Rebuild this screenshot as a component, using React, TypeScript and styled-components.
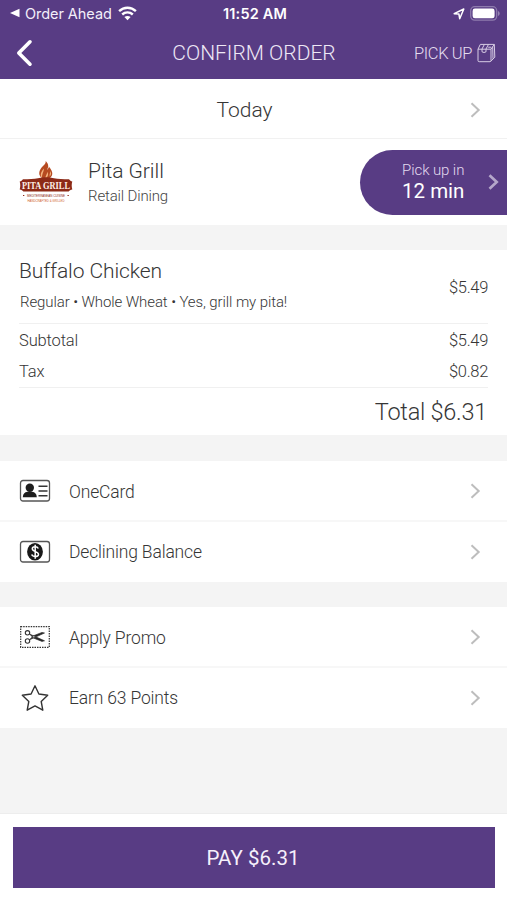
import React from 'react';
import styled, { createGlobalStyle } from 'styled-components';

const Global = createGlobalStyle`
  *, *::before, *::after { box-sizing: border-box; }
  html, body { margin: 0; padding: 0; }
  body { background: #f4f4f4; font-family: Roboto, "Liberation Sans", sans-serif; }
  button { font: inherit; }
`;

const PURPLE = '#583c84';

const Screen = styled.div`
  width: 507px;
  height: 900px;
  display: flex;
  flex-direction: column;
  background: #f4f4f4;
  overflow: hidden;
`;

const Header = styled.header`
  height: 79px;
  background: ${PURPLE};
  color: #fff;
`;

const StatusBar = styled.div`
  height: 27px;
  padding: 0 7px 0 10px;
  display: grid;
  grid-template-columns: 1fr auto 1fr;
  align-items: center;
  font-family: Inter, "Liberation Sans", sans-serif;
`;

const StatusGroup = styled.div<{ $end?: boolean }>`
  display: flex;
  align-items: center;
  justify-content: ${(p) => (p.$end ? 'flex-end' : 'flex-start')};
  gap: 5px;
`;

const NavBar = styled.div`
  height: 52px;
  padding: 0 11px 0 16px;
  display: grid;
  grid-template-columns: 1fr auto 1fr;
  align-items: center;
`;

const NavTitle = styled.div`
  padding: 2px 4px 0 0;
  display: flex;
`;

const BackButton = styled.button`
  display: flex;
  width: 18px;
  padding: 0;
  border: 0;
  background: none;
  color: #fff;
`;

const PickUpMode = styled.div`
  display: flex;
  justify-content: flex-end;
  align-items: center;
  gap: 5px;

  span { padding-top: 1px; }
`;

const Text = styled.span<{ $size: number; $weight?: number; $color?: string; $spacing?: number }>`
  font-size: ${(p) => p.$size}px;
  font-weight: ${(p) => p.$weight ?? 300};
  color: ${(p) => p.$color ?? '#363636'};
  letter-spacing: ${(p) => p.$spacing ?? 0}px;
  line-height: 1.2;
  white-space: nowrap;
`;

const Card = styled.section<{ $gap?: number }>`
  background: #fff;
  margin-bottom: ${(p) => p.$gap ?? 0}px;
`;

const DayRow = styled.div`
  height: 60px;
  padding: 2px 26px 0 25px;
  display: grid;
  grid-template-columns: 1fr auto 1fr;
  align-items: center;
  border-bottom: 1px solid #f1f1f1;

  svg { grid-column: 3; justify-self: end; }
  span { grid-column: 2; margin-right: 17px; padding-top: 3px; }
`;

const VendorRow = styled.div`
  height: 86px;
  padding-left: 19px;
  display: flex;
  align-items: center;
`;

const VendorNames = styled.div`
  flex: 1;
  padding: 0 0 0 15px;
  display: flex;
  flex-direction: column;
  gap: 2px;
`;

const PickupTime = styled.button`
  width: 147px;
  height: 65px;
  padding: 0 8px 0 42px;
  border: 0;
  border-radius: 33px 0 0 33px;
  display: flex;
  align-items: center;
  justify-content: space-between;
  background: ${PURPLE};
`;

const PickupLabel = styled.span`
  display: flex;
  flex-direction: column;
  align-items: center;
`;

const OrderCard = styled(Card)`
  height: 185px;
  padding: 0 19px;
`;

const OrderItem = styled.div`
  height: 74px;
  display: flex;
  align-items: center;
  justify-content: space-between;
  border-bottom: 1px solid #f0f0f0;
`;

const ItemText = styled.div`
  display: flex;
  flex-direction: column;
  gap: 8px;
  padding-bottom: 3px;

  span + span { padding-left: 1px; }
`;

const ItemPrice = styled.div`
  padding-top: 2px;
`;

const Charges = styled.div`
  height: 64px;
  padding-top: 1px;
  border-bottom: 1px solid #f0f0f0;
`;

const Charge = styled.div`
  height: 31.5px;
  display: flex;
  align-items: center;
  justify-content: space-between;
`;

const TotalRow = styled.div`
  height: 47px;
  padding: 2px 1px 0 0;
  display: flex;
  align-items: center;
  justify-content: flex-end;
`;

const OptionRow = styled.button<{ $height: number; $line?: boolean }>`
  width: 100%;
  height: ${(p) => p.$height}px;
  padding: 0 26px 0 19px;
  border: 0;
  border-bottom: ${(p) => (p.$line ? '2px solid #f7f7f7' : '0')};
  display: grid;
  grid-template-columns: 50px 1fr auto;
  align-items: center;
  text-align: left;
  background: #fff;

  span { padding-top: ${(p) => (p.$line ? 3 : 1)}px; }
`;

const Footer = styled.footer`
  height: 87px;
  margin-top: auto;
  padding: 13px 12px 0 13px;
  background: #fff;
  border-top: 1px solid #ededed;
`;

const PayButton = styled.button`
  width: 100%;
  height: 61px;
  padding: 2px 2px 0 0;
  border: 0;
  display: flex;
  align-items: center;
  justify-content: center;
  background: ${PURPLE};
`;

const Chevron = ({ color = '#bdbdbd', width = 2 }: { color?: string; width?: number }) => (
  <svg width="12" height="18" viewBox="0 0 12 18" fill="none" stroke={color} strokeWidth={width}>
    <path d="M2.500 2.200 9.700 9l-7.200 6.800" />
  </svg>
);

const BackIcon = () => (
  <svg width="18" height="28" viewBox="0 0 18 28" fill="none" stroke="#fff" strokeWidth="3.600" strokeLinecap="round" strokeLinejoin="round">
    <path d="M14 2.800 2.800 14 14 25.200" />
  </svg>
);

const BackTriangle = () => (
  <svg width="10" height="10" viewBox="0 0 10 10" fill="#fff">
    <path d="M0 5 9.500.7v8.600z" />
  </svg>
);

const Wifi = () => (
  <svg width="20" height="15" viewBox="-1 0 20 15" fill="none" stroke="#fff" strokeWidth="2.400">
    <path d="M1.100 5.200c4.800-4.600 12-4.600 16.800 0" />
    <path d="M4.200 8.500c3-2.800 7.600-2.800 10.600 0" />
    <path d="M9.500 14.200 6.400 11.100c1.700-1.600 4.500-1.600 6.200 0z" fill="#fff" stroke="none" />
  </svg>
);

const LocationArrow = () => (
  <svg width="12" height="12" viewBox="0 0 12 12" fill="none" stroke="#fff" strokeWidth="1.500" strokeLinejoin="round">
    <path d="M1.200 5.700 10.800 1 6.700 10.700 5.900 6z" />
  </svg>
);

const Battery = () => (
  <svg width="30" height="15" viewBox="0 0 30 15">
    <rect x=".7" y=".7" width="26" height="13.400" rx="4" fill="none" stroke="#8e7bad" strokeWidth="1.300" />
    <rect x="2.600" y="2.600" width="22" height="9.600" rx="2.300" fill="#fff" />
    <path d="M28.200 5v5c1.800-.8 1.800-4.200 0-5z" fill="#a394bd" />
  </svg>
);

const Bag = () => (
  <svg width="19" height="20" viewBox="0 0 19 20" fill="none" stroke="#d8cde5" strokeWidth="1" strokeLinejoin="round">
    <path d="M1 6.200 3.300 1.400h14L14 6.200zM1 6.200v11.300q0 1.200 1.200 1.200H13q1 0 1-1.200V6.200" />
    <path d="m17.300 1.400.5 12.800-3.900 4M15.700 3.700l.3 12" />
    <path d="m5 6 2.300-4.400M9 6l2.400-4.400M5 6v2.800q2 1.400 4 0V6M11.200 4.200h3" />
  </svg>
);

const LogoSvg = styled.svg`
  flex: none;
  overflow: visible;
`;

const PitaGrillLogo = () => (
  <LogoSvg width="54" height="43" viewBox="0 0 54 43">
    <path d="M25.500 18.500c-8-3.500-5.500-9.500-1.500-13.500 2-2 3-3 2.700-5 4 4 2.300 7 1.300 9 1-1 2-2 1.800-3.400 4.700 5.400 5.200 10-1.500 12.900z" fill="#b64a20" />
    <path d="M23.300 17.500c-3.500-4 0-8 1.600-10-.1 4-2.600 6-1.600 10zM26.500 17.800c-.5-3 2-4.500 1.600-7 2 3 .5 5-1.600 7zM30.800 15.500c1.700-2 1.500-3.500.6-5.500-.1 2.500-1.300 3-.6 5.500z" fill="#f2b27e" />
    <path d="M4 18.300c6-.1 11 0 15-1 5-1.300 11-1.300 16 0 4 1 9 .9 15 1 1 1.300 1.800 1.900 3.300 2.300-.8 2.600-.8 5.200 0 7.800-1.800.2-2.800.9-3.600 2.200H4.300C3.500 29.300 2.500 28.600.7 28.400c.8-2.600.8-5.200 0-7.800 1.500-.4 2.300-1 3.300-2.300z" fill="#8c2a17" />
    <text x="27" y="28" textAnchor="middle" textLength="48" lengthAdjust="spacingAndGlyphs" fontFamily="Liberation Serif, serif" fontWeight="700" fontSize="10" fill="#fff0e8">PITA GRILL</text>
    <text x="27" y="35.600" textAnchor="middle" textLength="38" lengthAdjust="spacingAndGlyphs" fontFamily="Liberation Sans, sans-serif" fontSize="3.600" fill="#8c2a17">MEDITERRANEAN CUISINE</text>
    <text x="27" y="41" textAnchor="middle" textLength="37" lengthAdjust="spacingAndGlyphs" fontFamily="Liberation Sans, sans-serif" fontSize="3.200" fill="#cf5a2c">HANDCRAFTED &amp; GRILLED</text>
    <path d="M4 34h1.300v1H4zM48.500 34h1.300v1h-1.300z" fill="#8c2a17" />
  </LogoSvg>
);

const CardIcon = () => (
  <svg width="32" height="24" viewBox="0 0 32 24">
    <rect x="1.500" y="1.500" width="29" height="20.500" rx="2.500" fill="#fff" stroke="#555" strokeWidth="1.300" />
    <circle cx="10.800" cy="8.700" r="4.200" fill="#1d1d1d" />
    <path d="M3.800 18.200q.2-4.700 4.700-5.400h4.600q4.500.7 4.700 5.400z" fill="#1d1d1d" />
    <path d="M19.500 7.200h9M19.500 12h9M19.500 16.700h9" stroke="#333" strokeWidth="1.400" />
  </svg>
);

const CashIcon = () => (
  <svg width="32" height="24" viewBox="0 0 32 24">
    <rect x="1.500" y="1.500" width="29" height="20.500" rx="2.500" fill="#fff" stroke="#555" strokeWidth="1.300" />
    <ellipse cx="16" cy="11.800" rx="7.900" ry="8.800" fill="#191919" />
    <path d="M19.300 8.500c-1-2.300-6-2.400-6 .3 0 3.400 6.200 2.200 6.200 5.600 0 2.900-5.800 2.700-6.800.1M16.200 4.800v14" fill="none" stroke="#fff" strokeWidth="1.500" />
  </svg>
);

const PromoIcon = () => (
  <svg width="32" height="24" viewBox="0 0 32 24" fill="none" stroke="#333">
    <rect x="1.700" y="1.700" width="28.600" height="20.600" strokeWidth="1.200" strokeDasharray="1.500 1" />
    <g strokeWidth="1.100">
      <circle cx="8.500" cy="7.800" r="2.200" />
      <circle cx="8.500" cy="16" r="2.200" />
    </g>
    <path d="M10.500 9 25.500 15.800l-2.500.6L14.400 13zM10.500 14.800 25.500 8l-2.500-.6-8.600 3.400z" fill="#222" strokeWidth=".7" />
  </svg>
);

const StarIcon = () => (
  <svg width="32" height="30" viewBox="0 0 32 30" fill="none" stroke="#333" strokeWidth="1.400" strokeLinejoin="round">
    <path d="m16 2.800 3.900 8.200 8.800 1.200-6.500 6.300 1.600 8.700-7.800-4.300-7.800 4.300 1.600-8.700-6.500-6.300 8.800-1.200z" />
  </svg>
);

const options = [
  [
    { label: 'OneCard', icon: <CardIcon />, height: 61 },
    { label: 'Declining Balance', icon: <CashIcon />, height: 60 },
  ],
  [
    { label: 'Apply Promo', icon: <PromoIcon />, height: 61 },
    { label: 'Earn 63 Points', icon: <StarIcon />, height: 60 },
  ],
];

const charges = [
  { label: 'Subtotal', amount: '$5.49' },
  { label: 'Tax', amount: '$0.82' },
];

export default function App() {
  return (
    <>
      <Global />
      <Screen>
        <Header>
          <StatusBar>
            <StatusGroup>
              <BackTriangle />
              <Text $size={14.5} $weight={400} $color="#f3effa" $spacing={-0.05}>Order Ahead</Text>
              <Wifi />
            </StatusGroup>
            <Text $size={14.5} $weight={600} $color="#fff" $spacing={0.2}>11:52 AM</Text>
            <StatusGroup $end>
              <LocationArrow />
              <Battery />
            </StatusGroup>
          </StatusBar>
          <NavBar>
            <BackButton aria-label="Back"><BackIcon /></BackButton>
            <NavTitle>
              <Text $size={21} $color="#eee8f6">CONFIRM ORDER</Text>
            </NavTitle>
            <PickUpMode>
              <Text $size={16.5} $color="#e6def0" $spacing={-0.4}>PICK UP</Text>
              <Bag />
            </PickUpMode>
          </NavBar>
        </Header>

        <Card $gap={25}>
          <DayRow>
            <Text $size={21}>Today</Text>
            <Chevron />
          </DayRow>
          <VendorRow>
            <PitaGrillLogo />
            <VendorNames>
              <Text $size={21} $spacing={-0.05}>Pita Grill</Text>
              <Text $size={15} $spacing={-0.15} $color="#444">Retail Dining</Text>
            </VendorNames>
            <PickupTime>
              <PickupLabel>
                <Text $size={15} $spacing={-0.1} $color="#e3daef">Pick up in</Text>
                <Text $size={20.5} $weight={400} $color="#fff">12 min</Text>
              </PickupLabel>
              <Chevron color="#b5a7ca" width={2.7} />
            </PickupTime>
          </VendorRow>
        </Card>

        <OrderCard $gap={26}>
          <OrderItem>
            <ItemText>
              <Text $size={21} $spacing={-0.1}>Buffalo Chicken</Text>
              <Text $size={15} $spacing={-0.1}>Regular • Whole Wheat • Yes, grill my pita!</Text>
            </ItemText>
            <ItemPrice>
              <Text $size={16.5} $spacing={-0.3}>$5.49</Text>
            </ItemPrice>
          </OrderItem>
          <Charges>
            {charges.map((c) => (
              <Charge key={c.label}>
                <Text $size={16.5} $spacing={-0.15}>{c.label}</Text>
                <Text $size={16.5} $spacing={-0.3}>{c.amount}</Text>
              </Charge>
            ))}
          </Charges>
          <TotalRow>
            <Text $size={23.5} $spacing={-0.25}>Total $6.31</Text>
          </TotalRow>
        </OrderCard>

        {options.map((group, i) => (
          <Card key={i} $gap={25}>
            {group.map((o, j) => (
              <OptionRow key={o.label} $height={o.height} $line={j === 0}>
                {o.icon}
                <Text $size={17.5} $spacing={-0.17}>{o.label}</Text>
                <Chevron />
              </OptionRow>
            ))}
          </Card>
        ))}

        <Footer>
          <PayButton>
            <Text $size={20.5} $weight={400} $color="#f5f0fb">PAY $6.31</Text>
          </PayButton>
        </Footer>
      </Screen>
    </>
  );
}
